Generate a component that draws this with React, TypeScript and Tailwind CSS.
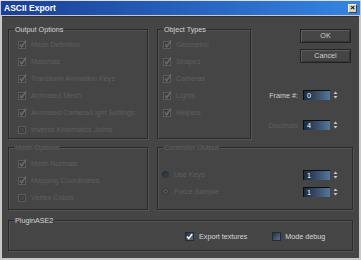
import React from 'react';

const font = { fontFamily: '"Liberation Sans", Arial, sans-serif' };

const CheckBox = ({ checked, enabled }: { checked?: boolean; enabled?: boolean }) => {
  if (enabled) {
    return (
      <svg width="9" height="9" viewBox="0 0 9 9" className="shrink-0">
        <defs>
          <linearGradient id="cbg" x1="0" y1="0" x2="1" y2="1">
            <stop offset="0" stopColor="#1d2c40" />
            <stop offset="1" stopColor="#57779a" />
          </linearGradient>
        </defs>
        <rect x="0" y="0" width="9" height="9" fill="url(#cbg)" />
        <rect x="0.5" y="0.5" width="8" height="8" fill="none" stroke="#2a2a2a" />
        {checked && (
          <polyline points="2,4.5 3.8,6.6 7.2,2" fill="none" stroke="#ffffff" strokeWidth="1.5" />
        )}
      </svg>
    );
  }
  return (
    <svg width="9" height="9" viewBox="0 0 9 9" className="shrink-0">
      <rect x="0.5" y="1.5" width="7" height="7" fill="none" stroke="#5c5c5c" />
      <rect x="1.5" y="2.5" width="5" height="5" fill="none" stroke="#3a3a3a" />
      {checked && (
        <polyline points="2,4.5 3.6,7 8,0.5" fill="none" stroke="#6a6a6a" strokeWidth="1.4" />
      )}
    </svg>
  );
};

const Radio = ({ selected }: { selected?: boolean }) => (
  <svg width="7" height="7" viewBox="0 0 7 7" className="shrink-0">
    <circle cx="3.5" cy="3.5" r="3" fill={selected ? '#5a5a5a' : '#2b3a4c'} stroke="#333" />
    {selected && <circle cx="3.5" cy="3.5" r="1.3" fill="#3a3a3a" />}
    {!selected && <path d="M1.5 4.5 A2 2 0 0 1 4.5 1.5" stroke="#1c2430" fill="none" />}
  </svg>
);

const Arrows = () => (
  <svg width="7" height="10" viewBox="0 0 7 10" className="shrink-0">
    <polygon points="1.5,4 3.5,1.5 5.5,4" fill="#c8c8c8" />
    <polygon points="1.5,6 3.5,8.5 5.5,6" fill="#c8c8c8" />
  </svg>
);

const Spinner = ({ value }: { value: string }) => (
  <div className="flex items-center gap-[2px]">
    <div className="w-[27px] h-[10px] border-l border-t border-[#0c0c0c] bg-linear-to-r from-[#1c2b40] to-[#56779a] text-white text-[7.2px] leading-[9px] pl-[3px]">
      {value}
    </div>
    <Arrows />
  </div>
);

const Group = ({
  label,
  disabled,
  className,
  children,
}: {
  label: string;
  disabled?: boolean;
  className?: string;
  children?: React.ReactNode;
}) => (
  <div
    className={`relative border border-[#2a2a2a] shadow-[inset_1px_1px_0_#545454,1px_1px_0_#545454] ${className ?? ''}`}
  >
    <span
      className={`absolute -top-[5px] left-[5px] bg-[#454545] px-[1px] text-[7.2px] leading-[9px] whitespace-nowrap ${
        disabled ? 'text-[#5f5f5f]' : 'text-[#d4d4d4]'
      }`}
    >
      {label}
    </span>
    {children}
  </div>
);

const Row = ({ label, checked, className }: { label: string; checked?: boolean; className?: string }) => (
  <div className={`flex items-center h-[17px] gap-[4px] ${className ?? ''}`}>
    <CheckBox checked={checked} />
    <span className="text-[7.2px] leading-[9px] text-[#5f5f5f] whitespace-nowrap">{label}</span>
  </div>
);

const Button = ({ children }: { children: React.ReactNode }) => (
  <div className="ml-auto mr-[2px] w-[51px] h-[14px] flex items-center justify-center border border-[#232323] shadow-[inset_1px_1px_0_#5e5e5e,inset_-1px_-1px_0_#353535] text-[7.2px] text-[#d0d0d0]">
    {children}
  </div>
);

export default function App() {
  const output = [
    { label: 'Mesh Definition', checked: true },
    { label: 'Materials', checked: true },
    { label: 'Transform Animation Keys', checked: true },
    { label: 'Animated Mesh', checked: true },
    { label: 'Animated Camera/Light Settings', checked: true },
    { label: 'Inverse Kinematics Joints', checked: false },
  ];
  const objects = ['Geometric', 'Shapes', 'Cameras', 'Lights', 'Helpers'];
  const mesh = [
    { label: 'Mesh Normals', checked: true },
    { label: 'Mapping Coordinates', checked: true },
    { label: 'Vertex Colors', checked: false },
  ];

  return (
    <div style={font} className="w-[361px] h-[260px] bg-[#c9c9c9] border-t border-[#e0e0e0] flex flex-col">
      {/* Title bar */}
      <div className="mx-[1px] h-[14px] bg-linear-to-r from-[#1a3e98] to-[#3585e2] flex items-center justify-between pl-[3px] pr-[3px]">
        <span className="text-white font-bold text-[8.5px] leading-[10px]">ASCII Export</span>
        <div className="w-[9px] h-[9px] bg-[#d6d3cc] border border-[#f4f4f4] border-r-[#404040] border-b-[#404040] flex items-center justify-center text-black text-[8px] font-bold leading-none">
          ×
        </div>
      </div>

      {/* Body */}
      <div className="flex-1 mx-[2px] mb-[2px] mt-[1px] bg-[#454545] border-t border-[#303030] pl-[6px] pr-[6px] pt-[12px] flex flex-col">
        <div className="flex h-[110px]">
          <Group label="Output Options" className="w-[140px] pt-[6px] pl-[9px]">
            {output.map((o) => (
              <Row key={o.label} label={o.label} checked={o.checked} />
            ))}
          </Group>
          <Group label="Object Types" className="ml-[9px] w-[94px] pt-[6px] pl-[5px]">
            {objects.map((o) => (
              <Row key={o} label={o} checked />
            ))}
          </Group>
          <div className="flex-1 flex flex-col">
            <Button>OK</Button>
            <div className="mt-[6px]">
              <Button>Cancel</Button>
            </div>
            <div className="mt-[27px] flex items-center justify-end gap-[5px] pr-[14px]">
              <span className="text-[7.2px] text-[#d0d0d0] leading-[9px]">Frame #:</span>
              <Spinner value="0" />
            </div>
            <div className="mt-[20px] flex items-center justify-end gap-[5px] pr-[14px]">
              <span className="text-[7.2px] text-[#5f5f5f] leading-[9px]">Decimals</span>
              <Spinner value="4" />
            </div>
          </div>
        </div>

        <div className="flex h-[63px] mt-[8px]">
          <Group label="Mesh Options" disabled className="w-[140px] pt-[7px] pl-[9px]">
            {mesh.map((o) => (
              <Row key={o.label} label={o.label} checked={o.checked} />
            ))}
          </Group>
          <Group label="Controller Output" disabled className="ml-[9px] flex-1 pt-[18px] pl-[4px] pr-[13px]">
            {[
              { label: 'Use Keys', selected: false },
              { label: 'Force Sample', selected: true },
            ].map((r) => (
              <div key={r.label} className="flex items-center h-[17px]">
                <Radio selected={r.selected} />
                <span className="ml-[5px] text-[7.2px] leading-[9px] text-[#5f5f5f]">{r.label}</span>
                <div className="ml-auto">
                  <Spinner value="1" />
                </div>
              </div>
            ))}
          </Group>
        </div>

        <Group label="PluginASE2" className="mt-[10px] h-[31px] pt-[10px]">
          <div className="flex items-center h-[10px]">
            <div className="ml-[176px] flex items-center gap-[5px]">
              <CheckBox enabled checked />
              <span className="text-[7.2px] leading-[9px] text-[#d8d8d8]">Export textures</span>
            </div>
            <div className="ml-[25px] flex items-center gap-[4px]">
              <CheckBox enabled />
              <span className="text-[7.2px] leading-[9px] text-[#d8d8d8]">Mode debug</span>
            </div>
          </div>
        </Group>
      </div>
    </div>
  );
}
